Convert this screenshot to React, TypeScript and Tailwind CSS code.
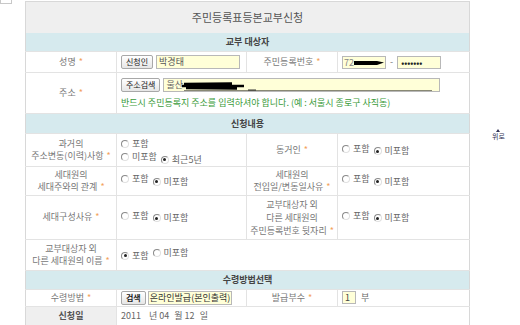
import React from "react";

const Star = () => <span className="text-[#f3a25a] ml-[3px]">*</span>;

function Radio({ on }: { on?: boolean }) {
  return (
    <span className="inline-flex items-center justify-center w-[8px] h-[8px] rounded-full border border-[#8a8a8a] border-r-[#e0e0e0] border-b-[#e0e0e0] bg-white mr-[3px]">
      {on && <span className="w-[3px] h-[3px] rounded-full bg-[#222]" />}
    </span>
  );
}

function Opt({ label, on }: { label: string; on?: boolean }) {
  return (
    <span className="inline-flex items-center mr-[4px]">
      <Radio on={on} />
      {label}
    </span>
  );
}

const Label = ({ children }: { children: React.ReactNode }) => (
  <td className="p-0 border-b border-r border-[#e3e3e3] text-center text-[#777] whitespace-nowrap">
    {children}
  </td>
);

const Section = ({ title, h }: { title: string; h: string }) => (
  <tr>
    <td colSpan={4} className={`${h} p-0 bg-[#d6eaee] text-center font-bold text-[#444] border-b border-[#e3e3e3]`}>
      {title}
    </td>
  </tr>
);

const Btn = ({ children, bold }: { children: React.ReactNode; bold?: boolean }) => (
  <span className={`h-[14px] px-[4px] border border-[#a8a8a8] rounded-[2px] bg-gradient-to-b from-white to-[#e6e6e6] text-[8px] text-[#222] leading-[12px] whitespace-nowrap ${bold ? "font-bold" : ""}`}>
    {children}
  </span>
);

export default function App() {
  return (
    <div className="relative w-[520px] h-[325px] bg-white overflow-hidden text-[9px] leading-[12px] text-[#666] font-['Noto_Sans_CJK_KR','Noto_Sans',sans-serif]">
      <div className="absolute left-0 top-[-8px] w-[12px] h-[12px] border border-[#c8c8c8]" />
      <div className="absolute left-[492px] top-[129px] flex flex-col items-center text-[7px] text-[#335] leading-[8px]">
        <span className="w-0 h-0 border-l-[2px] border-r-[2px] border-b-[3px] border-l-transparent border-r-transparent border-b-[#335]" />
        <span>위로</span>
      </div>

      <table className="ml-[25px] mt-[1px] w-[444px] border-collapse border-t border-l border-r border-[#d8d8d8] table-fixed">
        <colgroup>
          <col className="w-[91px]" />
          <col className="w-[130px]" />
          <col className="w-[91px]" />
          <col className="w-[132px]" />
        </colgroup>
        <tbody>
          <tr>
            <td colSpan={4} className="h-[31px] p-0 bg-[#efefef] text-center text-[11px] text-[#555]">
              주민등록표등본교부신청
            </td>
          </tr>
          <Section title="교부 대상자" h="h-[19px]" />
          <tr className="h-[21px]">
            <Label>성명<Star /></Label>
            <td className="p-0 border-b border-r border-[#e3e3e3] pl-[4px]">
              <div className="flex items-center">
                <Btn>신청인</Btn>
                <span className="ml-[3px] w-[84px] h-[14px] border border-[#b8b8b8] bg-[#ffffd8] text-[#555] leading-[12px] pl-[2px]">박경태</span>
              </div>
            </td>
            <td className="p-0 border-b border-r border-[#e3e3e3] text-center text-[#777]">주민등록번호<Star /></td>
            <td className="p-0 border-b border-[#e3e3e3] pl-[4px]">
              <div className="flex items-center">
                <span className="relative w-[44px] h-[13px] border border-[#b8b8b8] bg-[#ffffd8] text-[#888] leading-[11px] pl-[1px]">
                  72
                  <svg className="absolute left-[11px] top-[3px]" width="31" height="6" viewBox="0 0 31 6">
                    <path d="M0 1 L23 1 L30 2.5 L23 5 L0 5 Z" fill="#000" />
                  </svg>
                </span>
                <span className="mx-[4px] text-[#777]">-</span>
                <span className="w-[44px] h-[13px] border border-[#b8b8b8] bg-[#ffffd8] text-[#222] text-[8px] font-bold leading-[11px] pl-[3px]">•••••••</span>
              </div>
            </td>
          </tr>
          <tr className="h-[41px]">
            <Label>주소<Star /></Label>
            <td colSpan={3} className="p-0 border-b border-[#e3e3e3] pl-[4px]">
              <div className="flex items-center">
                <Btn>주소검색</Btn>
                <span className="relative ml-[3px] w-[277px] h-[14px] border border-[#b8b8b8] bg-[#ffffd8] text-[#666] leading-[12px] pl-[2px]">
                  울산
                  <svg className="absolute left-[18px] top-[2px]" width="258" height="10" viewBox="0 0 258 10">
                    <path d="M2 3 L50 2.5 M0 5 L62 5 M4 7 L55 7.5" stroke="#000" strokeWidth="2.4" fill="none" />
                    <path d="M66 9 L74 9" stroke="#333" strokeWidth="1" />
                    <path d="M2 10 L250 10" stroke="#111" strokeWidth="1" />
                  </svg>
                </span>
              </div>
              <div className="mt-[5px] text-[#3b9b3b] whitespace-nowrap">반드시 주민등록지 주소를 입력하셔야 합니다. (예 : 서울시 종로구 사직동)</div>
            </td>
          </tr>
          <Section title="신청내용" h="h-[20px]" />
          <tr className="h-[30px]">
            <Label>과거의<br />주소변동(이력)사항<Star /></Label>
            <td className="p-0 border-b border-r border-[#e3e3e3] pl-[4px] pt-[4px]">
              <div><Opt label="포함" /></div>
              <div><Opt label="미포함" /><Opt label="최근5년" on /></div>
            </td>
            <td className="p-0 border-b border-r border-[#e3e3e3] text-center text-[#777]">동거인<Star /></td>
            <td className="p-0 border-b border-[#e3e3e3] pl-[4px]"><Opt label="포함" /><Opt label="미포함" on /></td>
          </tr>
          <tr className="h-[29px]">
            <Label>세대원의<br />세대주와의 관계<Star /></Label>
            <td className="p-0 border-b border-r border-[#e3e3e3] pl-[4px]"><Opt label="포함" /><Opt label="미포함" on /></td>
            <td className="p-0 border-b border-r border-[#e3e3e3] text-center text-[#777] whitespace-nowrap">세대원의<br />전입일/변동일사유<Star /></td>
            <td className="p-0 border-b border-[#e3e3e3] pl-[4px]"><Opt label="포함" /><Opt label="미포함" on /></td>
          </tr>
          <tr className="h-[44px]">
            <Label>세대구성사유<Star /></Label>
            <td className="p-0 border-b border-r border-[#e3e3e3] pl-[4px]"><Opt label="포함" /><Opt label="미포함" on /></td>
            <td className="p-0 border-b border-r border-[#e3e3e3] text-center text-[#777] whitespace-nowrap leading-[13px]">교부대상자 외<br />다른 세대원의<br />주민등록번호 뒷자리<Star /></td>
            <td className="p-0 border-b border-[#e3e3e3] pl-[4px]"><Opt label="포함" /><Opt label="미포함" on /></td>
          </tr>
          <tr className="h-[31px]">
            <Label>교부대상자 외<br />다른 세대원의 이름<Star /></Label>
            <td colSpan={3} className="p-0 border-b border-[#e3e3e3] pl-[4px]"><Opt label="포함" on /><Opt label="미포함" /></td>
          </tr>
          <Section title="수령방법선택" h="h-[19px]" />
          <tr className="h-[17px]">
            <Label>수령방법<Star /></Label>
            <td className="p-0 border-b border-r border-[#e3e3e3] pl-[4px]">
              <div className="flex items-center">
                <Btn bold>검색</Btn>
                <span className="ml-[2px] w-[84px] h-[14px] border border-[#b8b8b8] bg-[#ffffd8] text-[#333] leading-[12px] pl-[1px] whitespace-nowrap overflow-hidden">온라인발급(본인출력)</span>
              </div>
            </td>
            <td className="p-0 border-b border-r border-[#e3e3e3] text-center text-[#777]">발급부수<Star /></td>
            <td className="p-0 border-b border-[#e3e3e3] pl-[4px]">
              <div className="flex items-center">
                <span className="w-[14px] h-[13px] border border-[#b8b8b8] bg-[#ffffd8] text-[#444] leading-[11px] pl-[2px]">1</span>
                <span className="ml-[5px]">부</span>
              </div>
            </td>
          </tr>
          <tr className="h-[19px]">
            <td className="p-0 border-b border-r border-[#e3e3e3] bg-[#efefef] text-center font-bold text-[#555]">신청일</td>
            <td colSpan={3} className="p-0 border-b border-[#e3e3e3] pl-[4px] text-[#666] whitespace-nowrap">
              2011 <span className="ml-[6px]">년</span> 04 <span className="ml-[3px]">월</span> 12 <span className="ml-[3px]">일</span>
            </td>
          </tr>
        </tbody>
      </table>
    </div>
  );
}
